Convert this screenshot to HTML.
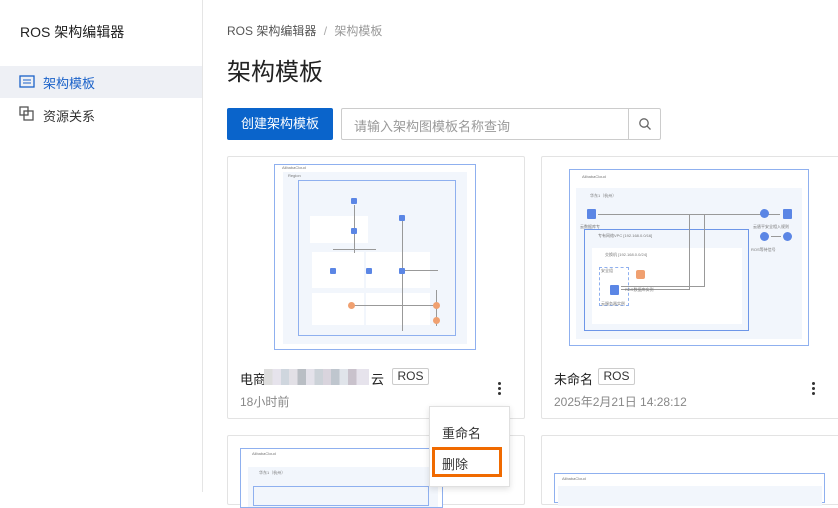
<!DOCTYPE html>
<html><head><meta charset="utf-8"><style>
*{box-sizing:border-box;margin:0;padding:0}
body{width:838px;height:492px;overflow:hidden;background:#fff;font-family:"Liberation Sans","Noto Sans CJK SC",sans-serif;color:#333;position:relative}
.a{position:absolute}
.side{left:0;top:0;width:203px;height:492px;border-right:1px solid #e5e5e5;background:#fff}
.card{border:1px solid #e3e3e3;border-radius:2px;background:#fff}
.b{position:absolute;border:1px solid #8fb0ef}
.f{position:absolute;background:#f2f6fc}
.w{position:absolute;background:#fff}
.ln{position:absolute;background:#999}
.ic{position:absolute;width:6px;height:6px;background:#5b86e5;border-radius:1px}
.oc{position:absolute;width:7px;height:7px;background:#f0a070;border-radius:50%}
.t{position:absolute;font-size:4px;color:#777;white-space:nowrap}
.dots{position:absolute;width:3px}
.dots i{display:block;width:3px;height:3px;background:#333;border-radius:50%;margin-bottom:2px}
</style></head><body>
<div class="a side"></div>
<div class="a" style="left:20px;top:22px;font-size:14px;color:#222">ROS 架构编辑器</div>
<div class="a" style="left:0;top:66px;width:202px;height:32px;background:#eef0f5"></div>
<svg class="a" style="left:19px;top:75px" width="16" height="14"><rect x="1" y="1" width="14" height="11" fill="none" stroke="#1b62c9" stroke-width="1.3"/><line x1="4" y1="5" x2="12" y2="5" stroke="#1b62c9"/><line x1="4" y1="8" x2="12" y2="8" stroke="#1b62c9"/></svg>
<div class="a" style="left:43px;top:73px;font-size:13px;color:#1b62c9">架构模板</div>
<svg class="a" style="left:19px;top:106px" width="16" height="16"><rect x="1" y="1" width="8" height="8" fill="none" stroke="#555" stroke-width="1.3"/><rect x="5" y="5" width="9" height="9" fill="none" stroke="#555" stroke-width="1.3"/></svg>
<div class="a" style="left:43px;top:106px;font-size:13px;color:#333">资源关系</div>

<div class="a" style="left:227px;top:22px;font-size:12px;color:#555">ROS 架构编辑器 <span style="color:#aaa;margin:0 4px">/</span> <span style="color:#999">架构模板</span></div>
<div class="a" style="left:227px;top:52px;font-size:24px;color:#222">架构模板</div>
<div class="a" style="left:227px;top:108px;width:106px;height:32px;background:#0a64cb;border-radius:2px;color:#fff;font-size:13px;line-height:32px;text-align:center">创建架构模板</div>
<div class="a" style="left:341px;top:108px;width:320px;height:32px;border:1px solid #ccc;border-radius:2px"></div>
<div class="a" style="left:354px;top:116px;font-size:13px;color:#999">请输入架构图模板名称查询</div>
<div class="a" style="left:628px;top:109px;width:1px;height:30px;background:#ccc"></div>
<svg class="a" style="left:638px;top:117px" width="14" height="14"><circle cx="6" cy="6" r="4.2" fill="none" stroke="#666" stroke-width="1.3"/><line x1="9" y1="9" x2="12.5" y2="12.5" stroke="#666" stroke-width="1.3"/></svg>

<!-- card 1 -->
<div class="a card" style="left:227px;top:156px;width:298px;height:263px"></div>
<div class="b" style="left:274px;top:164px;width:202px;height:186px;background:#fff"></div>
<div class="t" style="left:282px;top:165px">AlibabaCloud</div>
<div class="f" style="left:283px;top:172px;width:184px;height:172px"></div>
<div class="t" style="left:288px;top:173px">Region</div>
<div class="b" style="left:298px;top:180px;width:158px;height:156px"></div>
<div class="w" style="left:310px;top:216px;width:58px;height:27px"></div>
<div class="w" style="left:312px;top:252px;width:52px;height:36px"></div>
<div class="w" style="left:366px;top:252px;width:64px;height:36px"></div>
<div class="w" style="left:312px;top:293px;width:52px;height:32px"></div>
<div class="w" style="left:366px;top:293px;width:64px;height:32px"></div>
<div class="ln" style="left:354px;top:205px;width:1px;height:48px"></div>
<div class="ln" style="left:333px;top:249px;width:43px;height:1px"></div>
<div class="ln" style="left:402px;top:220px;width:1px;height:111px"></div>
<div class="ln" style="left:351px;top:305px;width:85px;height:1px"></div>
<div class="ln" style="left:436px;top:290px;width:1px;height:36px"></div>
<div class="ln" style="left:402px;top:270px;width:36px;height:1px"></div>
<div class="ic" style="left:351px;top:198px"></div><div class="ic" style="left:399px;top:215px"></div>
<div class="ic" style="left:351px;top:228px"></div>
<div class="ic" style="left:330px;top:268px"></div><div class="ic" style="left:366px;top:268px"></div><div class="ic" style="left:399px;top:268px"></div>
<div class="oc" style="left:348px;top:302px"></div><div class="oc" style="left:433px;top:302px"></div><div class="oc" style="left:433px;top:317px"></div>

<div class="a" style="left:240px;top:369px;font-size:13px;color:#222">电商</div>
<div class="a" style="left:264px;top:369px;width:105px;height:16px;background:linear-gradient(90deg,#ddd 0 8%,#e6e3ec 8% 16%,#cfd6de 16% 24%,#e2e0e6 24% 32%,#b9bec4 32% 40%,#e4e2ea 40% 48%,#ccd2d8 48% 56%,#d9d4dd 56% 64%,#bfc6ce 64% 72%,#e0e4ea 72% 80%,#c9c2cc 80% 88%,#e6e3ec 88%)"></div>
<div class="a" style="left:371px;top:369px;font-size:13px;color:#222">云</div>
<div class="a" style="left:392px;top:368px;width:37px;height:17px;border:1px solid #ccc;border-radius:2px;font-size:12px;line-height:15px;text-align:center;color:#333">ROS</div>
<div class="a" style="left:240px;top:393px;font-size:12px;color:#888">18小时前</div>
<div class="dots" style="left:498px;top:382px"><i></i><i></i><i></i></div>

<!-- card 2 -->
<div class="a card" style="left:541px;top:156px;width:310px;height:263px"></div>
<div class="b" style="left:569px;top:169px;width:240px;height:177px;background:#fff"></div>
<div class="t" style="left:582px;top:174px">AlibabaCloud</div>
<div class="f" style="left:576px;top:188px;width:226px;height:151px"></div>
<div class="t" style="left:590px;top:193px">华东1（杭州）</div>
<div class="b" style="left:584px;top:229px;width:165px;height:102px;border-color:#6d96e8"></div>
<div class="t" style="left:598px;top:233px">专有网络VPC [192.168.0.0/16]</div>
<div class="w" style="left:592px;top:248px;width:150px;height:76px"></div>
<div class="t" style="left:605px;top:252px">交换机 [192.168.0.0/24]</div>
<div class="a" style="left:599px;top:267px;width:30px;height:39px;border:1px dashed #8fb0ef"></div>
<div class="ln" style="left:598px;top:214px;width:182px;height:1px"></div>
<div class="ln" style="left:689px;top:214px;width:1px;height:75px"></div>
<div class="ln" style="left:704px;top:214px;width:1px;height:72px"></div>
<div class="ln" style="left:621px;top:286px;width:84px;height:1px"></div>
<div class="ln" style="left:621px;top:289px;width:69px;height:1px"></div>
<div class="ln" style="left:771px;top:236px;width:10px;height:1px"></div>
<div class="ic" style="left:587px;top:209px;width:9px;height:10px"></div>
<div class="ic" style="left:783px;top:209px;width:9px;height:10px"></div>
<div class="ic" style="left:760px;top:209px;width:9px;height:9px;border-radius:50%"></div>
<div class="ic" style="left:760px;top:232px;width:9px;height:9px;border-radius:50%"></div>
<div class="ic" style="left:783px;top:232px;width:9px;height:9px;border-radius:50%"></div>
<div class="ic" style="left:610px;top:285px;width:9px;height:10px"></div>
<div class="oc" style="left:636px;top:270px;width:9px;height:9px;border-radius:2px"></div>
<div class="t" style="left:580px;top:224px">云数据库专</div>
<div class="t" style="left:753px;top:224px">云盾平安全相入规则</div>
<div class="t" style="left:751px;top:247px">ROS等待信号</div>
<div class="t" style="left:601px;top:268px">安全组</div>
<div class="t" style="left:601px;top:301px">云服务器实例</div>
<div class="t" style="left:625px;top:287px">RDS数据库实例</div>

<div class="a" style="left:554px;top:369px;font-size:13px;color:#222">未命名</div>
<div class="a" style="left:598px;top:368px;width:37px;height:17px;border:1px solid #ccc;border-radius:2px;font-size:12px;line-height:15px;text-align:center">ROS</div>
<div class="a" style="left:554px;top:393px;font-size:12px;color:#888">2025年2月21日 14:28:12</div>
<div class="dots" style="left:812px;top:382px"><i></i><i></i><i></i></div>

<!-- row 2 -->
<div class="a card" style="left:227px;top:435px;width:298px;height:70px"></div>
<div class="b" style="left:240px;top:448px;width:203px;height:60px;background:#fff"></div>
<div class="t" style="left:252px;top:451px">AlibabaCloud</div>
<div class="f" style="left:248px;top:467px;width:190px;height:40px"></div>
<div class="t" style="left:259px;top:470px">华东1（杭州）</div>
<div class="b" style="left:253px;top:486px;width:176px;height:20px"></div>
<div class="a card" style="left:541px;top:435px;width:310px;height:70px"></div>
<div class="b" style="left:554px;top:473px;width:271px;height:30px;background:#fff"></div>
<div class="t" style="left:562px;top:476px">AlibabaCloud</div>
<div class="f" style="left:558px;top:486px;width:264px;height:20px"></div>

<!-- dropdown -->
<div class="a" style="left:429px;top:406px;width:81px;height:81px;background:#fff;border:1px solid #e0e0e0;box-shadow:0 2px 6px rgba(0,0,0,.12)"></div>
<div class="a" style="left:442px;top:423px;font-size:13px;color:#333">重命名</div>
<div class="a" style="left:432px;top:447px;width:70px;height:30px;border:3px solid #f06a00"></div>
<div class="a" style="left:442px;top:454px;font-size:13px;color:#333">删除</div>
</body></html>
